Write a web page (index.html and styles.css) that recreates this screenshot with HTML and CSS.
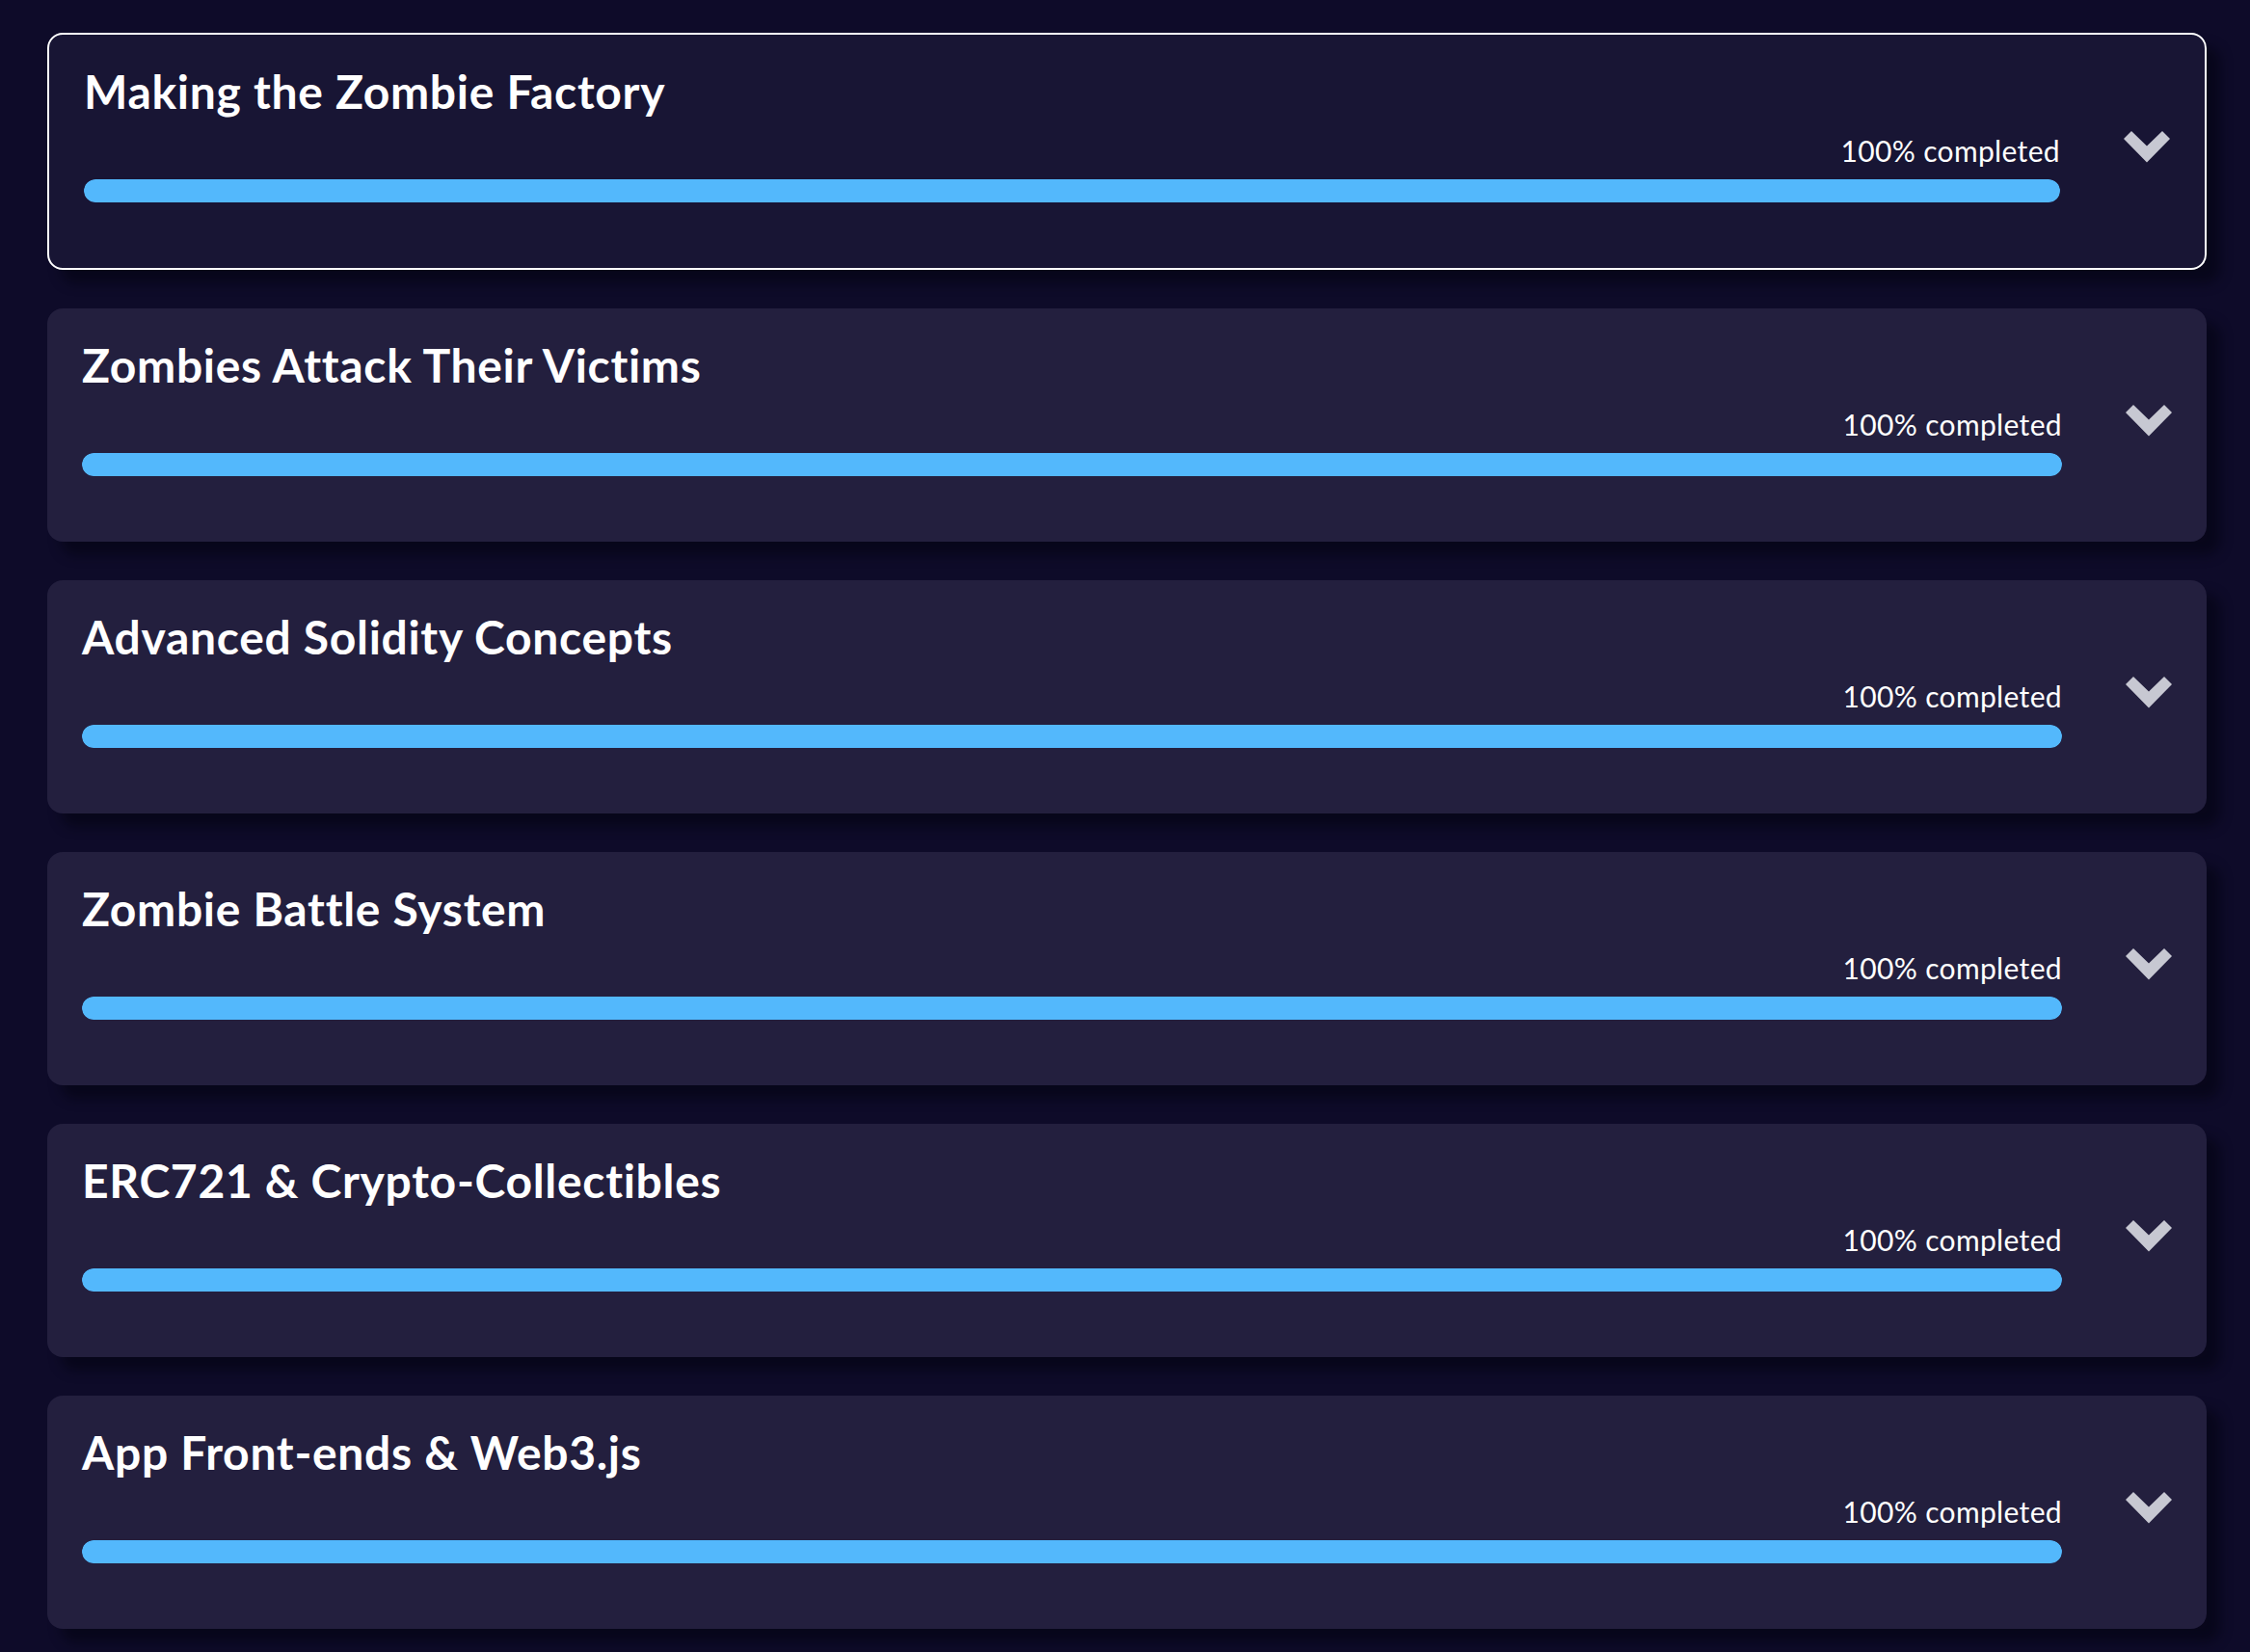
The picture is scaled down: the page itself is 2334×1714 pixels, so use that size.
FILE: index.html
```html
<!DOCTYPE html>
<html lang="en">
<head>
<meta charset="utf-8">
<title>Lessons</title>
<link rel="stylesheet" href="styles.css">
</head>
<body>
<div class="lesson-list">
  <section class="lesson lesson--active">
    <div class="lesson-main">
      <h2 class="lesson-title">Making the Zombie Factory</h2>
      <div class="lesson-progress-label">100% completed</div>
      <div class="lesson-bar"><div class="lesson-bar-fill" style="width:100%"></div></div>
    </div>
    <div class="lesson-toggle"><svg viewBox="0 0 48 33" width="48" height="33"><polygon points="0,8 8,0 24,15.5 40,0 48,8 24,32.5"/></svg></div>
  </section>
  <section class="lesson">
    <div class="lesson-main">
      <h2 class="lesson-title">Zombies Attack Their Victims</h2>
      <div class="lesson-progress-label">100% completed</div>
      <div class="lesson-bar"><div class="lesson-bar-fill" style="width:100%"></div></div>
    </div>
    <div class="lesson-toggle"><svg viewBox="0 0 48 33" width="48" height="33"><polygon points="0,8 8,0 24,15.5 40,0 48,8 24,32.5"/></svg></div>
  </section>
  <section class="lesson">
    <div class="lesson-main">
      <h2 class="lesson-title">Advanced Solidity Concepts</h2>
      <div class="lesson-progress-label">100% completed</div>
      <div class="lesson-bar"><div class="lesson-bar-fill" style="width:100%"></div></div>
    </div>
    <div class="lesson-toggle"><svg viewBox="0 0 48 33" width="48" height="33"><polygon points="0,8 8,0 24,15.5 40,0 48,8 24,32.5"/></svg></div>
  </section>
  <section class="lesson">
    <div class="lesson-main">
      <h2 class="lesson-title">Zombie Battle System</h2>
      <div class="lesson-progress-label">100% completed</div>
      <div class="lesson-bar"><div class="lesson-bar-fill" style="width:100%"></div></div>
    </div>
    <div class="lesson-toggle"><svg viewBox="0 0 48 33" width="48" height="33"><polygon points="0,8 8,0 24,15.5 40,0 48,8 24,32.5"/></svg></div>
  </section>
  <section class="lesson">
    <div class="lesson-main">
      <h2 class="lesson-title">ERC721 &amp; Crypto-Collectibles</h2>
      <div class="lesson-progress-label">100% completed</div>
      <div class="lesson-bar"><div class="lesson-bar-fill" style="width:100%"></div></div>
    </div>
    <div class="lesson-toggle"><svg viewBox="0 0 48 33" width="48" height="33"><polygon points="0,8 8,0 24,15.5 40,0 48,8 24,32.5"/></svg></div>
  </section>
  <section class="lesson">
    <div class="lesson-main">
      <h2 class="lesson-title">App Front-ends &amp; Web3.js</h2>
      <div class="lesson-progress-label">100% completed</div>
      <div class="lesson-bar"><div class="lesson-bar-fill" style="width:100%"></div></div>
    </div>
    <div class="lesson-toggle"><svg viewBox="0 0 48 33" width="48" height="33"><polygon points="0,8 8,0 24,15.5 40,0 48,8 24,32.5"/></svg></div>
  </section>
</div>
</body>
</html>
```

FILE: styles.css
```css
* {
  box-sizing: border-box;
}

html, body {
  margin: 0;
  padding: 0;
  background: #0e0b29;
}

body {
  font-family: "Lato", "Noto Sans", sans-serif;
  color: #ffffff;
  min-height: 1714px;
}

.lesson-list {
  display: flex;
  flex-direction: column;
  gap: 40px;
  padding: 34px 45px 0 49px;
}

.lesson {
  display: flex;
  align-items: flex-start;
  background: #231f3e;
  border-radius: 16px;
  padding: 35px 36px 68px 36px;
  box-shadow: 14px 14px 12px rgba(4, 3, 16, 0.55);
}

.lesson--active {
  background: #181534;
  border: 2px solid #ffffff;
}

.lesson-main {
  flex: 1;
  min-width: 0;
}

.lesson-title {
  margin: 0;
  font-size: 48px;
  line-height: 48px;
  font-weight: 700;
  letter-spacing: 0.7px;
  color: #ffffff;
}

.lesson-progress-label {
  margin-top: 22px;
  font-size: 30px;
  line-height: 30px;
  font-weight: 400;
  letter-spacing: 0.35px;
  text-align: right;
}

.lesson-bar {
  margin-top: 15px;
  height: 24px;
  border-radius: 12px;
  background: #2f2b52;
  overflow: hidden;
}

.lesson-bar-fill {
  height: 100%;
  background: #53b8fc;
  border-radius: 12px;
}

.lesson-toggle {
  flex: 0 0 48px;
  margin-left: 66px;
  margin-top: 65px;
  height: 33px;
}

.lesson-toggle svg {
  display: block;
  fill: #c7c8d2;
}
```
